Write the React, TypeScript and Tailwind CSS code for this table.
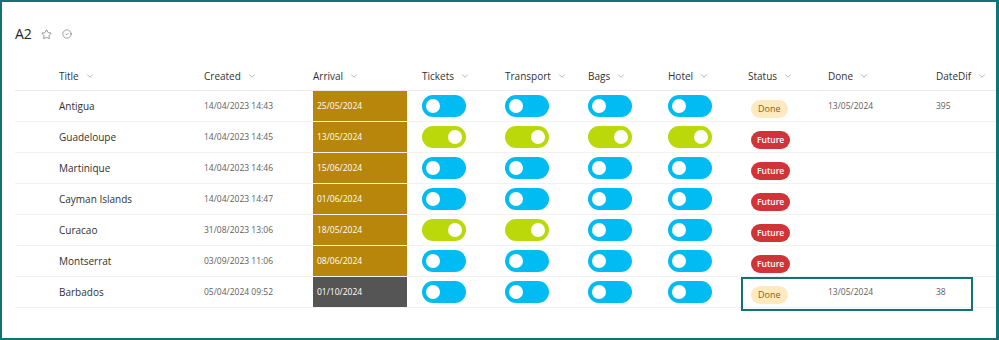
import React from 'react';
import { Star, CircleCheck, ChevronDown } from 'lucide-react';

type Row = {
  title: string;
  created: string;
  arrival: string;
  past?: boolean;
  toggles: boolean[];
  status: 'Done' | 'Future';
  done?: string;
  diff?: string;
};

const rows: Row[] = [
  { title: 'Antigua', created: '14/04/2023 14:43', arrival: '25/05/2024', toggles: [false, false, false, false], status: 'Done', done: '13/05/2024', diff: '395' },
  { title: 'Guadeloupe', created: '14/04/2023 14:45', arrival: '13/05/2024', toggles: [true, true, true, true], status: 'Future' },
  { title: 'Martinique', created: '14/04/2023 14:46', arrival: '15/06/2024', toggles: [false, false, false, false], status: 'Future' },
  { title: 'Cayman Islands', created: '14/04/2023 14:47', arrival: '01/06/2024', toggles: [false, false, false, false], status: 'Future' },
  { title: 'Curacao', created: '31/08/2023 13:06', arrival: '18/05/2024', toggles: [true, true, false, false], status: 'Future' },
  { title: 'Montserrat', created: '03/09/2023 11:06', arrival: '08/06/2024', toggles: [false, false, false, false], status: 'Future' },
  { title: 'Barbados', created: '05/04/2024 09:52', arrival: '01/10/2024', past: true, toggles: [false, false, false, false], status: 'Done', done: '13/05/2024', diff: '38' },
];

const cols = 'grid grid-cols-[189px_109px_109px_83px_83px_80px_80px_80px_108px_1fr]';

const Toggle = ({ on }: { on: boolean }) => (
  <div
    className={`w-[44px] h-[22px] rounded-full flex items-center px-[4px] ${
      on ? 'bg-[#bad80a] justify-end' : 'bg-[#00bcf2] justify-start'
    }`}
  >
    <div className="w-[14px] h-[14px] rounded-full bg-white" />
  </div>
);

const Head = ({ label, className = '' }: { label: string; className?: string }) => (
  <div className={`flex items-center gap-[6px] ${className}`}>
    <span>{label}</span>
    <ChevronDown className="w-[10px] h-[10px] text-[#8a8886]" strokeWidth={1.5} />
  </div>
);

export default function App() {
  return (
    <div
      className="w-[999px] h-[340px] bg-white border-2 border-r-[3px] border-[#137273] overflow-hidden text-[#323130]"
      style={{ fontFamily: '"Segoe UI", "Open Sans", sans-serif' }}
    >
      <div className="pl-[13px] pt-[21px]">
        <div className="flex items-center h-[22px]">
          <h1 className="text-[14px] leading-none text-[#252423]">A2</h1>
          <Star className="ml-[9px] w-[11px] h-[11px] text-[#605e5c]" strokeWidth={1.4} />
          <CircleCheck className="ml-[10px] w-[10px] h-[10px] text-[#605e5c]" strokeWidth={1.4} />
        </div>

        <div className="relative mt-[17px]">
          <div className={`${cols} h-[29px] items-center text-[10px] text-[#323130] border-b border-[#edebe9]`}>
            <Head label="Title" className="pl-[44px]" />
            <Head label="Created" />
            <Head label="Arrival" />
            <Head label="Tickets" />
            <Head label="Transport" />
            <Head label="Bags" />
            <Head label="Hotel" />
            <Head label="Status" />
            <Head label="Done" />
            <Head label="DateDif" />
          </div>

          {rows.map(r => (
            <div key={r.title} className={`${cols} h-[31px] items-center border-b border-[#f3f2f1]`}>
              <div className="pl-[44px] text-[10px] text-[#323130]">{r.title}</div>
              <div className="text-[8.5px] text-[#605e5c]">{r.created}</div>
              <div className="h-full flex items-center">
                <div
                  className={`w-[94px] h-full flex items-center pl-[4px] text-[8.5px] text-white ${
                    r.past ? 'bg-[#555555]' : 'bg-[#b8860b]'
                  }`}
                >
                  {r.arrival}
                </div>
              </div>
              {r.toggles.map((t, i) => (
                <div key={i}>
                  <Toggle on={t} />
                </div>
              ))}
              <div className="pl-[3px]">
                {r.status === 'Done' ? (
                  <span className="inline-flex items-center h-[18px] px-[7px] rounded-full bg-[#ffe9bf] text-[#8a6116] text-[9px]">
                    Done
                  </span>
                ) : (
                  <span className="inline-flex items-center h-[18px] px-[6px] rounded-full bg-[#d13438] text-white text-[8.5px] font-semibold">
                    Future
                  </span>
                )}
              </div>
              <div className="text-[8.5px] text-[#605e5c]">{r.done}</div>
              <div className="text-[8.5px] text-[#605e5c]">{r.diff}</div>
            </div>
          ))}

          <div className="absolute left-[726px] bottom-[-3px] w-[232px] h-[34px] border-2 border-[#137273] pointer-events-none" />
        </div>
      </div>
    </div>
  );
}
